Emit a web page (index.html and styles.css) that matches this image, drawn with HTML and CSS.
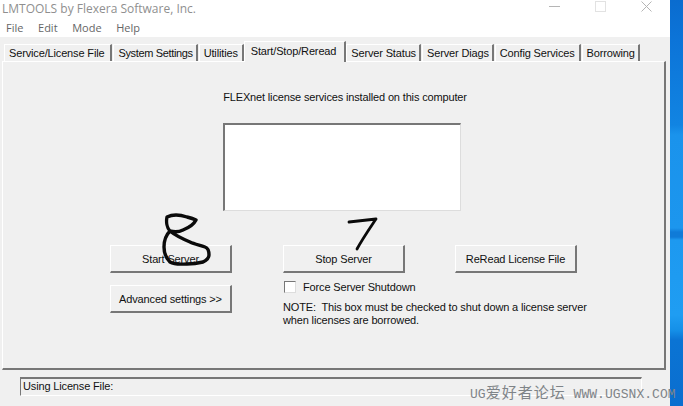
FILE: index.html
```html
<!DOCTYPE html>
<html>
<head>
  <title>LMTOOLS</title>
  <link rel="stylesheet" href="styles.css">
</head>
<body>

<div class="window">
  <div class="titlebar">
    <span class="title">LMTOOLS by Flexera Software, Inc.</span>
    <div class="caption-btns">
      <svg width="11" height="11" viewBox="0 0 11 11"><path d="M0 5.5H11" stroke="#b5b5b5" fill="none"/></svg>
      <svg width="11" height="11" viewBox="0 0 11 11"><rect x="0.5" y="0.5" width="10" height="10" stroke="#e2e2e2" fill="none"/></svg>
      <svg width="11" height="11" viewBox="0 0 11 11"><path d="M0.5 0.5L10.5 10.5M10.5 0.5L0.5 10.5" stroke="#b5b5b5" fill="none"/></svg>
    </div>
  </div>
  <div class="menubar">
    <span>File</span>
    <span>Edit</span>
    <span>Mode</span>
    <span>Help</span>
  </div>

  <div class="client">
    <div class="tabs">
      <div class="tab tab-first">Service/License File</div>
      <div class="tab tab-tight">System Settings</div>
      <div class="tab tab-wide">Utilities</div>
      <div class="tab active">Start/Stop/Reread</div>
      <div class="tab">Server Status</div>
      <div class="tab">Server Diags</div>
      <div class="tab tab-wide">Config Services</div>
      <div class="tab">Borrowing</div>
    </div>

    <div class="page">
      <p class="services-label">FLEXnet license services installed on this computer</p>
      <div class="listbox"></div>

      <div class="controls">
        <div class="col">
          <button class="btn">Start Server</button>
          <button class="btn">Advanced settings &gt;&gt;</button>
        </div>
        <div class="col">
          <button class="btn">Stop Server</button>
          <label class="check"><span class="box"></span>Force Server Shutdown</label>
          <p class="note">NOTE:&nbsp; This box must be checked to shut down a license server<br>when licenses are borrowed.</p>
        </div>
        <div class="col col-last">
          <button class="btn">ReRead License File</button>
        </div>
      </div>
    </div>

    <div class="statusbar">Using License File:</div>
  </div>
</div>

<div class="desktop"></div>

<!-- pen marks drawn over the screenshot -->
<svg class="scribble" width="683" height="406" viewBox="0 0 683 406">
  <path d="M170 231C167 228 166 222 167 217C173 214 181 215 187 217C191 218 194 219 196 220C194 224 188 228 183 230C179 232 174 232 170 231C166 235 164 241 164 247C164 253 166 258 170 262C175 265 181 264 187 264C193 264 199 263 203 262C207 260 209 258 209 255C209 251 208 248 205 247C199 245 194 244 190 242C183 239 176 236 170 231"/>
  <path class="seven" d="M349 222C358 221 367 220 376 219C370 228 363 238 357 249"/>
</svg>

<div class="watermark">UG<span class="wm-cjk">爱好者论坛</span> WWW.UGSNX.COM</div>

</body>
</html>
```

FILE: styles.css
```css
html, body {
  margin: 0;
  padding: 0;
  height: 406px;
  overflow: hidden;
}
body {
  display: flex;
  font-family: "Liberation Sans", Arial, sans-serif;
  font-size: 11px;
  letter-spacing: -0.15px;
  color: #111;
  background: #f0f0f0;
}
.window {
  width: 670px;
  height: 406px;
  flex: none;
  display: flex;
  flex-direction: column;
  background: #fff;
}
.desktop {
  flex: 1;
  background: linear-gradient(180deg, #0a6ccf 0, #0c74d8 40px, #1184e2 125px, #1a93ec 135px, #1c96ee 228px, #0f7bd8 232px, #0f7bd8 237px, #1d99f0 240px, #1f9df2 315px, #1590e8 330px, #0b74d4 340px, #0a6ecf 406px);
}
.titlebar {
  height: 17px;
  display: flex;
  justify-content: space-between;
  align-items: center;
  padding-left: 2px;
}
.title {
  font-family: "Open Sans", sans-serif;
  font-size: 12px;
  letter-spacing: 0;
  color: #8f8f8f;
}
.caption-btns {
  display: flex;
  gap: 35px;
  padding-right: 18px;
  align-self: flex-start;
  margin-top: 1px;
}
.menubar {
  height: 20px;
  display: flex;
  gap: 14.6px;
  align-items: center;
  padding-left: 6px;
  font-family: "Open Sans", sans-serif;
  font-size: 11px;
  letter-spacing: 0;
  color: #666;
}
.client {
  flex: 1;
  background: #f0f0f0;
  display: flex;
  flex-direction: column;
  padding: 6px 0 0 2px;
}
.tabs {
  display: flex;
  height: 18px;
  padding-left: 2px;
  gap: 1px;
}
.tab {
  margin-top: 1px;
  padding: 2px 3px 0 4px;
  border-top: 1px solid #fff;
  border-left: 1px solid #fff;
  border-right: 2px solid #777;
  white-space: nowrap;
}
.tab-first {
  padding-right: 6px;
}
.tab-tight {
  letter-spacing: -0.35px;
}
.tab-wide {
  padding-right: 4px;
}
.tab.active {
  margin: -2px -1px -1px -1px;
  padding: 3px 8px 0 6px;
  background: #f0f0f0;
  position: relative;
  z-index: 1;
}
.page {
  width: 664px;
  height: 309px;
  box-sizing: border-box;
  border-top: 1px solid #fff;
  border-left: 1px solid #fff;
  border-right: 2px solid #777;
  border-bottom: 2px solid #777;
  padding-left: 107px;
}
.services-label {
  margin: 29px 0 0;
  width: 470px;
  text-align: center;
}
.listbox {
  width: 235px;
  height: 85px;
  margin: 20px 0 0 113px;
  background: #fff;
  border-top: 2px solid #777;
  border-left: 2px solid #777;
  border-right: 1px solid #ddd;
  border-bottom: 1px solid #ddd;
}
.controls {
  display: flex;
  gap: 51px;
  margin-top: 34px;
}
.col {
  width: 122px;
  display: flex;
  flex-direction: column;
}
.col-last {
  margin-left: -1px;
}
.btn {
  width: 122px;
  height: 28px;
  padding: 0;
  box-sizing: border-box;
  font: inherit;
  letter-spacing: inherit;
  color: inherit;
  background: #f0f0f0;
  border-top: 1px solid #fff;
  border-left: 1px solid #fff;
  border-right: 2px solid #777;
  border-bottom: 2px solid #777;
}
.btn + .btn {
  margin-top: 12px;
}
.check {
  display: flex;
  align-items: center;
  gap: 7px;
  margin: 8px 0 0 1px;
  white-space: nowrap;
}
.box {
  flex: none;
  width: 10px;
  height: 10px;
  background: #fff;
  border-top: 1px solid #777;
  border-left: 1px solid #777;
  border-right: 1px solid #ddd;
  border-bottom: 1px solid #ddd;
}
.note {
  margin: 8px 0 0;
  line-height: 13px;
  white-space: nowrap;
}
.statusbar {
  width: 622px;
  height: 19px;
  box-sizing: border-box;
  margin: 7px 0 0 18px;
  padding: 1px 0 0 2px;
  border-top: 2px solid #777;
  border-left: 1px solid #777;
  border-right: 1px solid #fff;
  border-bottom: 1px solid #fff;
}
.scribble {
  position: absolute;
  left: 0;
  top: 0;
}
.scribble path {
  fill: none;
  stroke: #0a0a0a;
  stroke-width: 3.4;
  stroke-linecap: round;
  stroke-linejoin: round;
}
.scribble .seven {
  stroke-width: 2.8;
}
.watermark {
  position: absolute;
  left: 470px;
  top: 381px;
  white-space: nowrap;
  font-family: "Liberation Mono", "Noto Sans CJK SC", monospace;
  font-size: 13px;
  letter-spacing: 0.05px;
  color: #7f8488;
}
.wm-cjk {
  font-size: 15px;
  letter-spacing: 1px;
}
```
